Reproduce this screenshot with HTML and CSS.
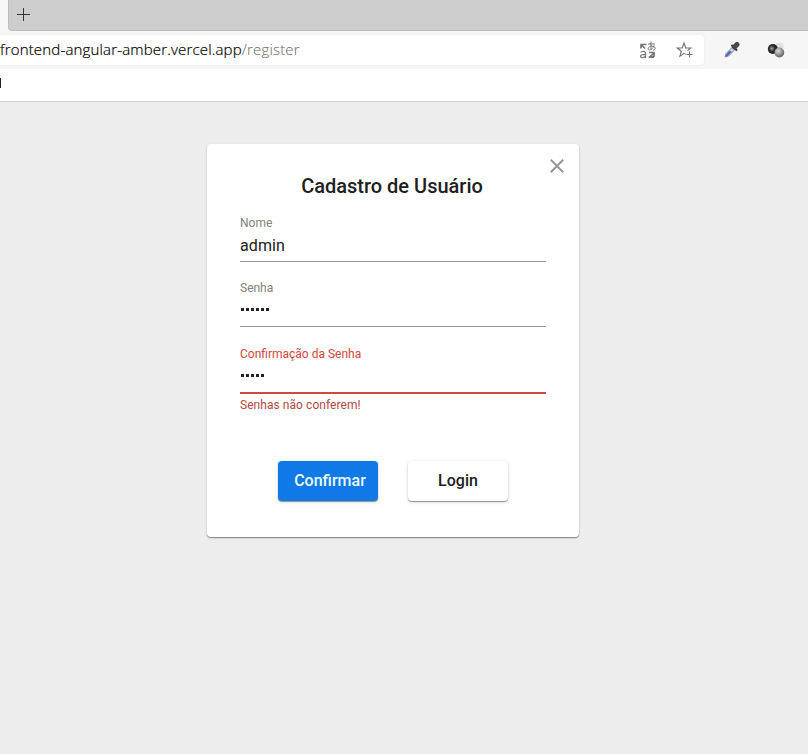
FILE: index.html
```html
<!DOCTYPE html>
<html lang="pt-BR">
<head>
<meta charset="utf-8">
<title>Cadastro de Usuário</title>
<link rel="stylesheet" href="styles.css">
</head>
<body>
<header class="browser">
  <div class="tabs">
    <div class="tab-strip">
      <svg class="plus" width="13" height="13" viewBox="0 0 13 13"><path d="M6.5 0v13M0 6.5h13" stroke="#333" fill="none"/></svg>
    </div>
  </div>
  <div class="toolbar">
    <div class="address">
      <div class="url"><span class="domain">frontend-angular-amber.vercel.app</span><span class="path">/register</span></div>
      <svg class="translate" width="18" height="18" viewBox="0 0 18 18">
        <path d="M2 7.500V3.500H7.500M2.500 4L6 7.500M10 11.500h5v4.500M10 16.200h5l-4-.5 4-3.500" stroke="#777" stroke-width="1.700" fill="none"/>
        <path d="M6.500 12.200c0-2.600-4.200-2.200-4.700-.8M6.500 12v5M6.500 13.300c-3 0-5 .2-5 1.900 0 2.100 3.700 2 5-.2" stroke="#777" stroke-width="1.200" fill="none"/>
        <path d="M9 3h7M12 .5v7.500M15 4.500c-.8 2.700-2.800 4.500-4.700 4.500-2 0-1.600-3.600 2.200-3.900 4.300-.3 4.700 3.400 1.300 4.200" stroke="#777" stroke-width="1" fill="none"/>
      </svg>
      <svg class="star" width="18" height="18" viewBox="0 0 18 18"><path d="M9.800 13.400L8 12.300 3.900 15.200 5.300 10.200 1.300 7h5L8 2l1.700 5h5L11.500 9.600M13.500 10.500v6M10.500 13.500h6" stroke="#707070" stroke-width="1.100" fill="none"/></svg>
    </div>
    <svg class="picker" width="18" height="18" viewBox="0 0 18 18">
      <path d="M2 16l1-3.500 6.500-6.500 2.500 2.500-6.500 6.500z" fill="#cbd3ef" stroke="#8589a0" stroke-width="1"/>
      <path d="M2.500 15.500l1-2.500 3-3 2.500.5-4.500 4.500z" fill="#4a62b8"/>
      <path d="M8.500 4l5.500 5.500" stroke="#333" stroke-width="2"/>
      <path d="M11.500 6l2.500-2.500" stroke="#484848" stroke-width="5" stroke-linecap="round"/>
    </svg>
    <svg class="balls" width="18" height="18" viewBox="0 0 18 18">
      <defs>
        <radialGradient id="dark" cx=".4" cy=".45" r=".6"><stop offset="0" stop-color="#aaa"/><stop offset=".45" stop-color="#333"/><stop offset="1" stop-color="#111"/></radialGradient>
        <radialGradient id="gray" cx=".4" cy=".35" r=".7"><stop offset="0" stop-color="#ddd"/><stop offset=".5" stop-color="#999"/><stop offset="1" stop-color="#555"/></radialGradient>
      </defs>
      <circle cx="12.500" cy="5.500" r="4" fill="#e0e0e0"/>
      <circle cx="5.800" cy="8" r="5" fill="url(#dark)"/>
      <circle cx="12.300" cy="11.500" r="4.900" fill="url(#gray)"/>
    </svg>
  </div>
  <div class="bookmarks"><span class="bookmark"></span></div>
</header>
<main class="page">
  <form class="card">
    <svg class="close" width="14" height="14" viewBox="0 0 14 14"><path d="M.8.8l12.400 12.400M13.200.8L.8 13.200" stroke="#969696" stroke-width="2"/></svg>
    <h1 class="title">Cadastro de Usuário</h1>
    <div class="field">
      <label class="label">Nome</label>
      <div class="value">admin</div>
    </div>
    <div class="field">
      <label class="label">Senha</label>
      <div class="value dots"><i></i><i></i><i></i><i></i><i></i><i></i></div>
    </div>
    <div class="field invalid">
      <label class="label">Confirmação da Senha</label>
      <div class="value dots"><i></i><i></i><i></i><i></i><i></i></div>
      <div class="error">Senhas não conferem!</div>
    </div>
    <div class="actions">
      <button type="button" class="btn primary">Confirmar</button>
      <button type="button" class="btn">Login</button>
    </div>
  </form>
</main>
</body>
</html>
```
FILE: styles.css
```css
* { box-sizing: border-box; }
body {
  margin: 0;
  height: 754px;
  overflow: hidden;
  background: #ededed;
  font-family: Roboto, "Liberation Sans", sans-serif;
  color: #202020;
}
.browser { height: 102px; }
.tabs { height: 31px; padding-left: 8px; background: #f7f7f7; }
.tab-strip {
  height: 31px;
  padding: 8px 0 0 8px;
  background: #cdcdcd;
  border-bottom: 1px solid #bdbdbd;
  border-left: 1px solid #bdbdbd;
  border-bottom-left-radius: 4px;
}
.plus { display: block; }
.toolbar {
  display: flex;
  align-items: center;
  height: 38px;
  background: #f6f6f6;
}
.address {
  display: flex;
  align-items: center;
  width: 704px;
  height: 30px;
  background: #fff;
  border-radius: 0 4px 4px 0;
  box-shadow: 0 0 3px rgba(0, 0, 0, .06);
}
.url {
  width: 639px;
  padding-bottom: 2px;
  font: 300 15px/20px "Open Sans", "Noto Sans", sans-serif;
  white-space: nowrap;
}
.domain { color: #000; letter-spacing: .17px; -webkit-text-stroke: .2px #000; }
.path { color: #666; letter-spacing: .16px; }
.translate { margin-right: 19px; }
.picker { margin-left: 19px; }
.balls { margin-left: 26px; }
.bookmarks {
  height: 33px;
  padding-top: 9px;
  background: #fff;
  border-bottom: 1px solid #cfcfcf;
}
.bookmark { display: block; width: 1px; height: 10px; background: #222; }
.page { padding: 42px 0 0 207px; }
.card {
  position: relative;
  width: 372px;
  height: 393px;
  padding: 30px 33px 0;
  background: #fff;
  border-radius: 4px;
  box-shadow: 0 1px 1px rgba(0, 0, 0, .38), 0 1px 3px rgba(0, 0, 0, .12);
}
.close { position: absolute; top: 15px; right: 15px; }
.title {
  margin: 0 0 14px;
  padding-right: 2px;
  height: 24px;
  font-size: 20px;
  line-height: 24px;
  font-weight: 500;
  text-align: center;
  white-space: nowrap;
}
.field { height: 65px; padding-top: 3px; }
.label {
  display: block;
  height: 16px;
  font-size: 12px;
  line-height: 16px;
  color: #808080;
}
.value {
  height: 31px;
  padding-top: 5px;
  font-size: 16px;
  line-height: 20px;
  letter-spacing: .1px;
  border-bottom: 1px solid #949494;
}
.dots { display: flex; gap: 2px; padding: 12px 0 0 1px; }
.dots i { width: 3px; height: 3px; background: #222; }
.invalid { height: 119px; padding-top: 4px; }
.invalid .label { color: #d0463d; }
.invalid .value { height: 32px; border-bottom: 2px solid #cb4a43; }
.error {
  margin-top: 3px;
  font-size: 12px;
  line-height: 16px;
  letter-spacing: .06px;
  color: #b3483f;
}
.actions { display: flex; gap: 30px; padding-left: 38px; }
.btn {
  width: 100px;
  height: 40px;
  padding: 0;
  border: 0;
  border-radius: 4px;
  background: #fff;
  color: #202020;
  font: 500 16px/40px Roboto, "Liberation Sans", sans-serif;
  box-shadow: 0 1px 1px rgba(0, 0, 0, .38), 0 1px 4px rgba(0, 0, 0, .14);
}
.primary {
  padding-left: 4px;
  background: #1079e6;
  color: #e9fbff;
}
```
